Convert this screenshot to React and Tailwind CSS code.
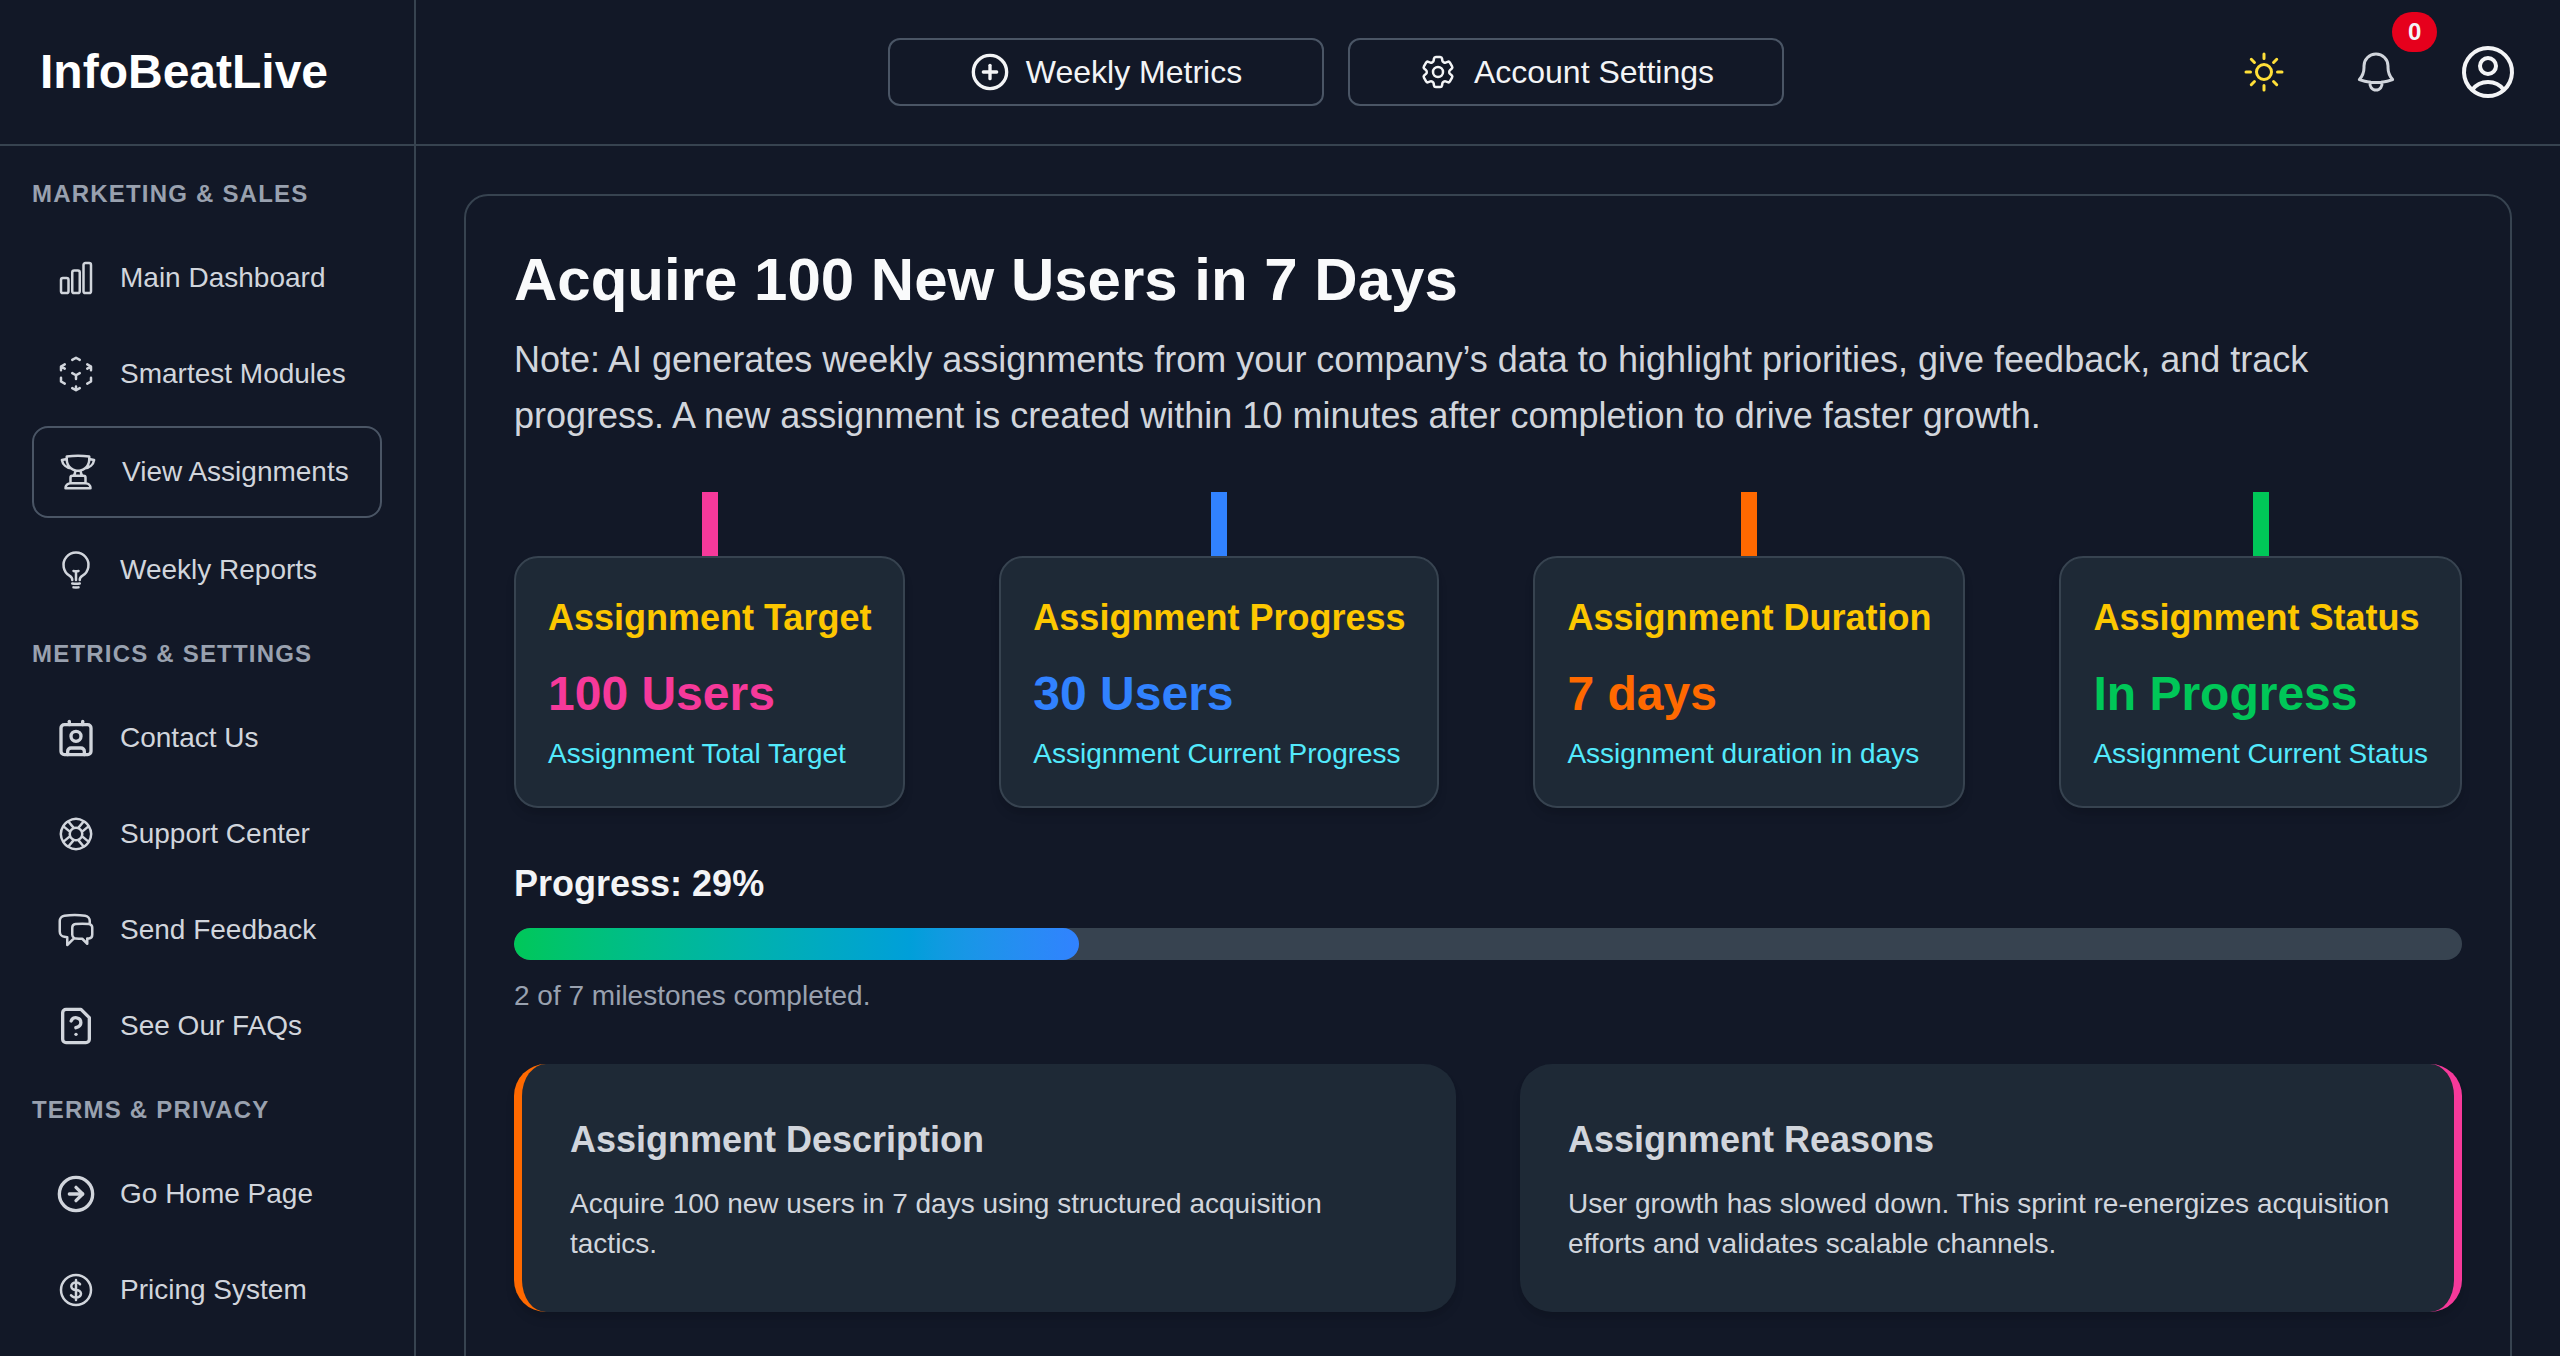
import {
  HiOutlineChartBar,
  HiOutlineChatBubbleLeftRight,
  HiOutlineCog6Tooth,
  HiOutlineCubeTransparent,
  HiOutlineCurrencyDollar,
  HiOutlineLifebuoy,
  HiOutlineLightBulb,
  HiOutlineTrophy,
  HiOutlineBell,
  HiOutlineSun,
  HiOutlineUserCircle,
} from "react-icons/hi2";
import { CircleArrowRight, CirclePlus, Contact } from "lucide-react";

const FileQuestionIcon = ({ className }) => (
  <svg
    className={className}
    viewBox="0 0 24 24"
    fill="none"
    stroke="currentColor"
    strokeWidth="2"
    strokeLinecap="round"
    strokeLinejoin="round"
  >
    <path d="M12 17h.01" />
    <path d="M15 2H6a2 2 0 0 0-2 2v16a2 2 0 0 0 2 2h12a2 2 0 0 0 2-2V7Z" />
    <path d="M9.1 9a3 3 0 0 1 5.82 1c0 2-3 3-3 3" />
  </svg>
);

const sections = [
  {
    title: "Marketing & Sales",
    items: [
      { name: "Main Dashboard", icon: HiOutlineChartBar },
      { name: "Smartest Modules", icon: HiOutlineCubeTransparent },
      { name: "View Assignments", icon: HiOutlineTrophy, active: true },
      { name: "Weekly Reports", icon: HiOutlineLightBulb },
    ],
  },
  {
    title: "Metrics & Settings",
    items: [
      { name: "Contact Us", icon: Contact },
      { name: "Support Center", icon: HiOutlineLifebuoy },
      { name: "Send Feedback", icon: HiOutlineChatBubbleLeftRight },
      { name: "See Our FAQs", icon: FileQuestionIcon },
    ],
  },
  {
    title: "Terms & Privacy",
    items: [
      { name: "Go Home Page", icon: CircleArrowRight },
      { name: "Pricing System", icon: HiOutlineCurrencyDollar },
    ],
  },
];

const stats = [
  {
    title: "Assignment Target",
    value: "100 Users",
    note: "Assignment Total Target",
    bar: "bg-[#f6399a]",
    text: "text-[#f6399a]",
  },
  {
    title: "Assignment Progress",
    value: "30 Users",
    note: "Assignment Current Progress",
    bar: "bg-[#3182ff]",
    text: "text-[#3182ff]",
  },
  {
    title: "Assignment Duration",
    value: "7 days",
    note: "Assignment duration in days",
    bar: "bg-orange-500",
    text: "text-orange-500",
  },
  {
    title: "Assignment Status",
    value: "In Progress",
    note: "Assignment Current Status",
    bar: "bg-[#00c758]",
    text: "text-[#00c758]",
  },
];

const Sidebar = () => (
  <aside className="w-104 shrink-0 flex flex-col border-r-2 border-[#374350]">
    <div className="h-[146px] shrink-0 flex items-center px-10 border-b-2 border-[#374350]">
      <span className="text-5xl font-bold text-white">InfoBeatLive</span>
    </div>

    <nav className="flex-1 min-h-0 overflow-y-auto [scrollbar-width:none] px-8 py-2">
      {sections.map((section) => (
        <div key={section.title}>
          <h2 className="py-6 text-2xl/8 font-semibold uppercase tracking-wider text-gray-400">
            {section.title}
          </h2>
          <ul className="space-y-2">
            {section.items.map(({ name, icon: Icon, active }) => (
              <li key={name}>
                <a
                  href="#"
                  className={`flex items-center gap-6 p-6 rounded-2xl text-[28px]/10 text-gray-300 ${
                    active ? "border-2 border-gray-600" : ""
                  }`}
                >
                  <Icon className="size-10 shrink-0" />
                  <span className="whitespace-nowrap">{name}</span>
                </a>
              </li>
            ))}
          </ul>
        </div>
      ))}
    </nav>
  </aside>
);

const Header = () => (
  <header className="h-[146px] shrink-0 flex items-center pl-6 pr-10 border-b-2 border-[#374350]">
    <div className="flex-1 flex justify-center gap-6 text-[32px]/10 text-gray-100">
      <button className="w-[436px] h-17 flex items-center justify-center gap-4 rounded-xl border-2 border-gray-600">
        <CirclePlus className="size-10" />
        Weekly Metrics
      </button>
      <button className="w-[436px] h-17 flex items-center justify-center gap-4 rounded-xl border-2 border-gray-600">
        <HiOutlineCog6Tooth className="size-10" />
        Account Settings
      </button>
    </div>

    <div className="flex items-center gap-12">
      <button
        aria-label="Toggle theme"
        className="size-16 flex items-center justify-center text-[#ffdf38]"
      >
        <HiOutlineSun className="size-12" />
      </button>
      <button
        aria-label="Notifications"
        className="relative size-16 flex items-center justify-center text-gray-300"
      >
        <HiOutlineBell className="size-12" />
        <span className="absolute -top-7 left-12 px-4 rounded-full bg-[#e6001c] text-2xl/10 font-bold text-gray-100">
          0
        </span>
      </button>
      <button
        aria-label="Account"
        className="size-16 flex items-center justify-center text-gray-100"
      >
        <HiOutlineUserCircle className="size-16" />
      </button>
    </div>
  </header>
);

const StatCard = ({ title, value, note, bar, text }) => (
  <div className="flex flex-col items-center">
    <div className={`w-4 h-16 ${bar}`}></div>
    <div className="p-8 rounded-3xl border-2 border-[#374350] bg-[#1e2936] shadow-[0_8px_12px_-2px_rgba(0,0,0,0.1),0_4px_8px_-4px_rgba(0,0,0,0.1)]">
      <h3 className="text-4xl/14 font-semibold text-yellow-400">{title}</h3>
      <p className={`mt-4 text-5xl/16 font-bold ${text}`}>{value}</p>
      <p className="mt-2 text-[28px]/10 text-cyan-300">{note}</p>
    </div>
  </div>
);

const InfoCard = ({ title, children, className }) => (
  <div
    className={`p-12 rounded-4xl bg-[#1e2936] text-gray-300 shadow-[0_8px_12px_-2px_rgba(0,0,0,0.1),0_4px_8px_-4px_rgba(0,0,0,0.1)] ${className}`}
  >
    <h3 className="text-4xl/14 font-semibold">{title}</h3>
    <p className="mt-4 text-[28px]/10">{children}</p>
  </div>
);

const App = () => {
  const progress = 29;

  return (
    <div className="h-screen flex overflow-hidden bg-[#121827] font-['Liberation_Sans',Arial,sans-serif]">
      <Sidebar />

      <div className="flex-1 min-w-0 flex flex-col">
        <Header />

        <main className="flex-1 min-h-0 overflow-y-auto [scrollbar-width:none] p-12">
          <section className="p-12 pb-24 rounded-3xl border-2 border-[#374350]">
            <h1 className="text-6xl/18 font-bold text-gray-50">
              Acquire 100 New Users in 7 Days
            </h1>
            <p className="mt-4 text-4xl/14 text-gray-300">
              Note: AI generates weekly assignments from your company’s data to
              highlight priorities, give feedback, and track progress. A new
              assignment is created within 10 minutes after completion to drive
              faster growth.
            </p>

            {/* Stat cards */}
            <div className="mt-12 flex justify-between">
              {stats.map((stat) => (
                <StatCard key={stat.title} {...stat} />
              ))}
            </div>

            {/* Progress */}
            <div className="mt-12">
              <h2 className="text-4xl/14 font-semibold text-gray-100">
                Progress: {progress}%
              </h2>
              <div className="mt-4 h-8 rounded-full bg-[#374350] overflow-hidden">
                <div
                  className="h-full rounded-full bg-linear-to-r from-[#00c758] via-[#009fd9] via-70% to-[#3182ff]"
                  style={{ width: `${progress}%` }}
                ></div>
              </div>
              <p className="mt-4 text-[28px]/10 text-gray-400">
                2 of 7 milestones completed.
              </p>
            </div>

            {/* Details */}
            <div className="mt-12 grid grid-cols-2 gap-16">
              <InfoCard
                title="Assignment Description"
                className="border-l-8 border-orange-500"
              >
                Acquire 100 new users in 7 days using structured acquisition
                tactics.
              </InfoCard>
              <InfoCard
                title="Assignment Reasons"
                className="border-r-8 border-[#f6399a]"
              >
                User growth has slowed down. This sprint re-energizes acquisition
                efforts and validates scalable channels.
              </InfoCard>
            </div>
          </section>
        </main>
      </div>
    </div>
  );
};

export default App;
